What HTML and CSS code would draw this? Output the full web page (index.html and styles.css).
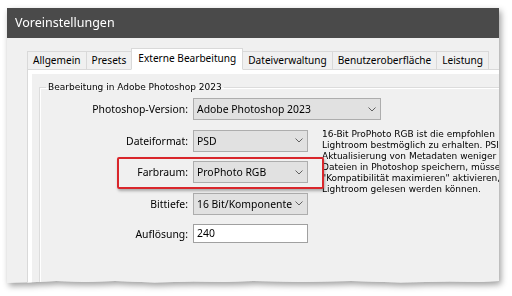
FILE: index.html
```html
<!DOCTYPE html>
<html lang="de">
<head>
<meta charset="utf-8">
<title>Voreinstellungen</title>
<link rel="stylesheet" href="styles.css">
</head>
<body>
<div class="stage">
  <div class="window">
    <div class="titlebar">Voreinstellungen</div>
    <div class="client">
      <div class="tabs">
        <div class="tab">Allgemein</div>
        <div class="tab">Presets</div>
        <div class="tab active">Externe Bearbeitung</div>
        <div class="tab">Dateiverwaltung</div>
        <div class="tab">Benutzeroberfläche</div>
        <div class="tab">Leistung</div>
      </div>
      <div class="panel">
        <fieldset class="group">
          <legend>Bearbeitung in Adobe Photoshop 2023</legend>
          <div class="form">
            <div class="label">Photoshop-Version:</div>
            <div class="select wide"><span>Adobe Photoshop 2023</span><svg class="chev" viewBox="0 0 8 5"><path d="M0.5 0.5 L4 4 L7.5 0.5"/></svg></div>

            <div class="label">Dateiformat:</div>
            <div class="select"><span>PSD</span><svg class="chev" viewBox="0 0 8 5"><path d="M0.5 0.5 L4 4 L7.5 0.5"/></svg></div>

            <div class="desc">
              <div>16-Bit ProPhoto RGB ist die empfohlen</div>
              <div>Lightroom bestmöglich zu erhalten. PSI</div>
              <div>Aktualisierung von Metadaten weniger</div>
              <div>Dateien in Photoshop speichern, müsse</div>
              <div>"Kompatibilität maximieren" aktivieren,</div>
              <div>Lightroom gelesen werden können.</div>
            </div>

            <div class="label">Farbraum:</div>
            <div class="select"><span>ProPhoto RGB</span><svg class="chev" viewBox="0 0 8 5"><path d="M0.5 0.5 L4 4 L7.5 0.5"/></svg></div>

            <div class="label">Bittiefe:</div>
            <div class="select"><span>16 Bit/Komponente</span><svg class="chev" viewBox="0 0 8 5"><path d="M0.5 0.5 L4 4 L7.5 0.5"/></svg></div>

            <div class="label">Auflösung:</div>
            <div class="input">240</div>
          </div>
          <div class="highlight"></div>
        </fieldset>
      </div>
    </div>
  </div>
</div>
</body>
</html>
```

FILE: styles.css
```css
* { box-sizing: border-box; }
html, body { margin: 0; padding: 0; background: #ffffff; }
body { width: 512px; height: 296px; overflow: hidden; }

.stage {
  padding: 8px 0 0 7px;
  filter: drop-shadow(2px 3px 3px rgba(0,0,0,0.38));
}

.window {
  width: 492px;
  height: 276px;
  background: #f0f0f0;
  overflow: hidden;
  clip-path: polygon(0 0, 100% 0, 100% 273px, 96% 274px, 90% 273.5px, 80% 274.5px, 70% 273px, 60% 274px, 50% 273px, 44% 274px, 38% 273.5px, 30% 274.5px, 22% 273px, 16% 274px, 10% 273px, 4% 274.5px, 0 275px);
  font-family: "Noto Sans", "Open Sans", sans-serif;
  font-size: 10.4px;
  color: #000;
}

.titlebar {
  height: 30px;
  background: #4a4a4a;
  color: #ffffff;
  font-size: 12.5px;
  line-height: 30px;
  padding-left: 8px;
}

.client {
  padding: 11px 0 0 20px;
}

.tabs {
  display: flex;
  align-items: flex-end;
  height: 21px;
  white-space: nowrap;
  position: relative;
  z-index: 1;
  margin-bottom: -1px;
  font-size: 10.1px;
}

.tab {
  height: 19px;
  line-height: 17px;
  padding: 0 5px;
  border: 1px solid #d9d9d9;
  border-left: none;
  background: #f0f0f0;
}
.tab:first-child { border-left: 1px solid #d9d9d9; }

.tab.active {
  height: 22px;
  line-height: 19px;
  background: #ffffff;
  border-bottom: 1px solid #ffffff;
  border-left: 1px solid #d9d9d9;
  margin-left: -1px;
  padding: 0 6px;
}

.panel {
  border: 1px solid #d9d9d9;
  border-right: none;
  background: #f0f0f0;
  box-shadow: inset 4px 4px 0 #ffffff;
  height: 240px;
  padding: 12px 0 0 11px;
}

.group {
  margin: 0;
  border: 1px solid #dcdcdc;
  border-right: none;
  border-bottom: none;
  box-shadow: inset 1px 1px 0 #ffffff;
  padding: 6px 0 0 0;
  position: relative;
  height: 220px;
  min-width: 0;
}

.group legend {
  font-family: "DejaVu Sans", sans-serif;
  font-size: 9px;
  padding: 0 2px;
  margin-left: 6px;
  color: #000;
}

.form {
  display: grid;
  grid-template-columns: 148px 115px 1fr;
  column-gap: 5px;
  row-gap: 9.5px;
  align-items: center;
}

.label {
  text-align: right;
  grid-column: 1;
  white-space: nowrap;
}

.select {
  grid-column: 2;
  height: 22px;
  background: #e1e1e1;
  border: 1px solid #adadad;
  display: flex;
  align-items: center;
  justify-content: space-between;
  padding: 0 4px 0 3px;
  white-space: nowrap;
}
.select.wide {
  grid-column: 2 / 4;
  width: 188px;
}
.chev {
  width: 8px;
  height: 5px;
  flex: none;
  fill: none;
  stroke: #606060;
  stroke-width: 1;
}

.input {
  grid-column: 2;
  height: 19px;
  background: #ffffff;
  border: 1px solid #a0a0a0;
  padding: 0 3px;
  line-height: 17px;
}

.desc {
  grid-column: 3;
  grid-row: 2 / 5;
  align-self: start;
  margin: -1px 0 0 9px;
  font-family: "DejaVu Sans", sans-serif;
  font-size: 9px;
  line-height: 11px;
  white-space: nowrap;
  color: #000;
}

.highlight {
  position: absolute;
  left: 77px;
  top: 65px;
  width: 207px;
  height: 32px;
  border: 2.5px solid #d9262b;
  border-radius: 2px;
  box-shadow: 1px 2px 3px rgba(0,0,0,0.3);
}
```
